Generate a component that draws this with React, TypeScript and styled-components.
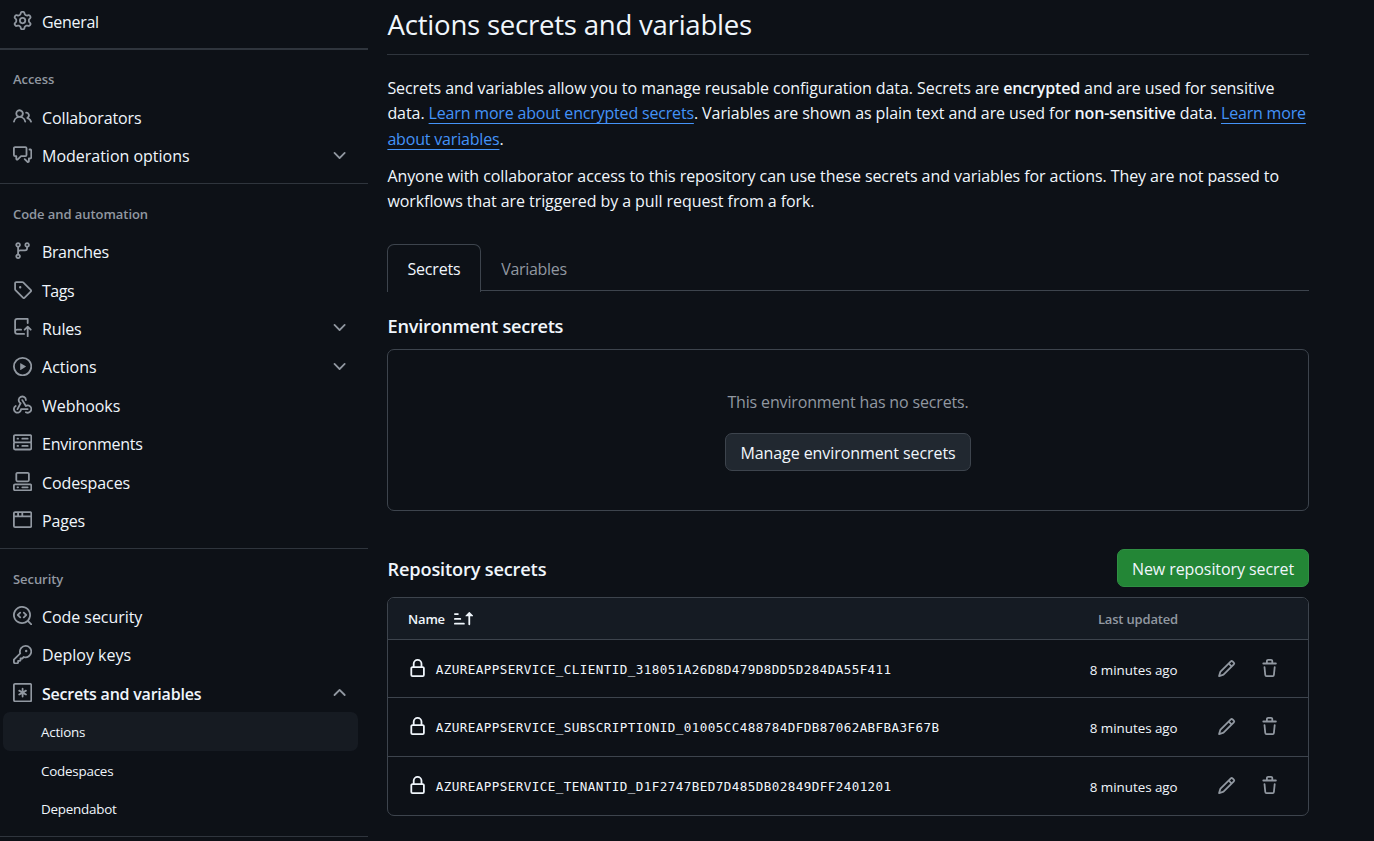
import React from 'react';
import styled, { createGlobalStyle } from 'styled-components';

const GlobalStyle = createGlobalStyle`
  * { box-sizing: border-box; }
  html, body { margin: 0; background: #0d1117; }
  body {
    height: 841px;
    overflow: hidden;
    color: #f0f6fc;
    font-family: "Open Sans", "Noto Sans", sans-serif;
    font-size: 16px;
  }
`;

const Page = styled.div`
  display: flex;
  width: 1374px;
  height: 841px;
  overflow: hidden;
`;

const Sidebar = styled.nav`
  width: 368px;
  flex: none;
  padding-top: 2px;
`;

const NavDivider = styled.div<{ $thick?: boolean }>`
  height: 19.2px;
  padding-top: ${(p) => (p.$thick ? '7.6px' : '8.4px')};
  &::before {
    content: '';
    display: block;
    border-top: ${(p) => (p.$thick ? 2 : 1)}px solid #2f353d;
  }
`;

const GroupLabel = styled.div`
  display: flex;
  align-items: center;
  height: 38.4px;
  padding: 1.4px 0 0 13px;
  color: #9198a1;
  font-size: 13px;
  font-weight: 600;
  letter-spacing: -0.06px;
`;

const NavRow = styled.a<{ $bold?: boolean; $tracking: number }>`
  display: flex;
  align-items: center;
  height: 38.4px;
  padding: 1.4px 19px 0 13px;
  font-weight: ${(p) => (p.$bold ? 600 : 400)};
  letter-spacing: ${(p) => p.$tracking}px;
  white-space: nowrap;
`;

const NavIcon = styled.span`
  width: 19px;
  margin: -2.4px 10px 0 0;
  color: #9198a1;
`;

const NavText = styled.span`
  flex: 1;
`;

const Chevron = styled.span`
  color: #9198a1;
  margin-top: -2.2px;
`;

const SubRow = styled.a<{ $active?: boolean }>`
  display: flex;
  align-items: center;
  height: 38.4px;
  margin: 0 10px 0 3px;
  padding: 1.6px 0 0 38px;
  border-radius: 7px;
  background: ${(p) => (p.$active ? '#161b22' : 'transparent')};
  font-size: 13.4px;
  letter-spacing: -0.22px;
`;

const Main = styled.main`
  width: 922px;
  margin-left: 19px;
`;

const Title = styled.h1`
  margin: 0;
  height: 55px;
  padding: 5px 0 0 0.6px;
  border-bottom: 1px solid #2f353d;
  font-size: 27.6px;
  line-height: 38px;
  font-weight: 400;
  letter-spacing: -0.25px;
  white-space: nowrap;
`;

const Intro = styled.div`
  height: 189px;
  padding: 20.8px 0 0 0.4px;
`;

const Paragraph = styled.p`
  margin: 0 0 11.8px;
  line-height: 25.4px;
  letter-spacing: -0.072px;
  white-space: nowrap;
  b { font-weight: 600; letter-spacing: -0.16px; }
`;

const Link = styled.a`
  color: #4493f8;
  letter-spacing: -0.18px;
  text-decoration: underline;
  text-decoration-thickness: 1px;
  text-underline-offset: 4px;
`;

const Tabs = styled.div`
  display: flex;
  height: 47px;
  box-shadow: inset 0 -1px 0 #3d444d;
`;

const Tab = styled.a<{ $selected?: boolean }>`
  display: flex;
  align-items: center;
  justify-content: center;
  width: ${(p) => (p.$selected ? 94 : 106)}px;
  height: ${(p) => (p.$selected ? 48 : 47)}px;
  padding-top: ${(p) => (p.$selected ? 1 : 3)}px;
  border: ${(p) => (p.$selected ? '1px solid #3d444d' : 'none')};
  border-bottom: 0;
  border-radius: 7px 7px 0 0;
  background: ${(p) => (p.$selected ? '#0d1117' : 'transparent')};
  color: ${(p) => (p.$selected ? '#f0f6fc' : '#9198a1')};
  letter-spacing: ${(p) => (p.$selected ? -0.15 : -0.3)}px;
`;

const Heading = styled.h2`
  margin: 0;
  padding: 2px 0 0 0.6px;
  font-size: 18.2px;
  font-weight: 600;
  letter-spacing: -0.17px;
  line-height: 28px;
`;

const EnvHeading = styled(Heading)`
  padding: 21px 0 9px 0.6px;
  letter-spacing: -0.29px;
`;

const EmptyBox = styled.section`
  display: flex;
  flex-direction: column;
  align-items: center;
  height: 162px;
  padding-top: 40px;
  border: 1px solid #3d444d;
  border-radius: 7px;
`;

const EmptyText = styled.div`
  height: 43px;
  line-height: 25px;
  color: #9198a1;
  letter-spacing: -0.155px;
`;

const Button = styled.button<{ $primary?: boolean }>`
  width: ${(p) => (p.$primary ? 192 : 246)}px;
  height: 38px;
  padding: 1px 0 0;
  border: 1px solid ${(p) => (p.$primary ? '#2f8f43' : '#3d444d')};
  border-radius: 7px;
  background: ${(p) => (p.$primary ? '#238636' : '#212830')};
  color: #f0f6fc;
  font: 400 16px "Open Sans", "Noto Sans", sans-serif;
  letter-spacing: -0.08px;
  white-space: nowrap;
`;

const RepoHeader = styled.div`
  display: flex;
  align-items: center;
  justify-content: space-between;
  height: 38px;
  margin: 38px 0 10px;
`;

const Table = styled.section`
  height: 219px;
  border: 1px solid #3d444d;
  border-radius: 7px;
  overflow: hidden;
`;

const TableHead = styled.div`
  display: flex;
  align-items: center;
  height: 41px;
  padding: 0 130px 0 20px;
  background: #151b23;
  font-size: 13px;
  font-weight: 600;
  letter-spacing: -0.17px;
  svg { margin-left: 9px; }
`;

const Updated = styled.span<{ $head?: boolean }>`
  margin-left: auto;
  padding-top: ${(p) => (p.$head ? 0 : 2.4)}px;
  color: ${(p) => (p.$head ? '#9198a1' : '#f0f6fc')};
  font-size: ${(p) => (p.$head ? 13 : 13.4)}px;
  letter-spacing: ${(p) => (p.$head ? -0.17 : -0.03)}px;
`;

const SecretRow = styled.div`
  display: flex;
  align-items: center;
  height: 58.45px;
  padding: 0 29px 0 20px;
  border-top: 1px solid #3d444d;
`;

const SecretName = styled.code`
  margin-left: 8.6px;
  padding-top: 1.6px;
  font-family: "DejaVu Sans Mono", monospace;
  font-size: 12.6px;
  letter-spacing: 0.415px;
`;

const RowIcon = styled.span<{ $gap?: number; $bright?: boolean }>`
  margin: -0.4px 0 0 ${(p) => p.$gap ?? 0}px;
  color: ${(p) => (p.$bright ? '#f0f6fc' : '#9198a1')};
`;

const IconSvg = styled.svg`
  display: block;
  flex: none;
  width: 19.2px;
  height: 19.2px;
  fill: currentColor;
`;

const iconPaths = {
  gear: 'M8 0a8.2 8.2 0 0 1 .701.031C9.444.095 9.99.645 10.16 1.29l.288 1.107c.018.066.079.158.212.224.231.114.454.243.668.386.123.082.233.09.299.071l1.103-.303c.644-.176 1.392.021 1.82.63.27.385.506.792.704 1.218.315.675.111 1.422-.364 1.891l-.814.806c-.049.048-.098.147-.088.294.016.257.016.515 0 .772-.01.147.038.246.088.294l.814.806c.475.469.679 1.216.364 1.891a7.977 7.977 0 0 1-.704 1.217c-.428.61-1.176.807-1.82.63l-1.102-.302c-.067-.019-.177-.011-.3.071a5.909 5.909 0 0 1-.668.386c-.133.066-.194.158-.211.224l-.29 1.106c-.168.646-.715 1.196-1.458 1.26a8.006 8.006 0 0 1-1.402 0c-.743-.064-1.289-.614-1.458-1.26l-.289-1.106c-.018-.066-.079-.158-.212-.224a5.738 5.738 0 0 1-.668-.386c-.123-.082-.233-.09-.299-.071l-1.103.303c-.644.176-1.392-.021-1.82-.63a8.12 8.12 0 0 1-.704-1.218c-.315-.675-.111-1.422.363-1.891l.815-.806c.05-.048.098-.147.088-.294a6.214 6.214 0 0 1 0-.772c.01-.147-.038-.246-.088-.294l-.815-.806C.635 6.045.431 5.298.746 4.623a7.92 7.92 0 0 1 .704-1.217c.428-.61 1.176-.807 1.82-.63l1.102.302c.067.019.177.011.3-.071.214-.143.437-.272.668-.386.133-.066.194-.158.211-.224l.29-1.106C6.009.645 6.556.095 7.299.03 7.53.01 7.764 0 8 0Zm-.571 1.525c-.036.003-.108.036-.137.146l-.289 1.105c-.147.561-.549.967-.998 1.189-.173.086-.34.183-.5.29-.417.278-.97.423-1.529.27l-1.103-.303c-.109-.03-.175.016-.195.045-.22.312-.412.644-.573.99-.014.031-.021.11.059.19l.815.806c.411.406.562.957.53 1.456a4.709 4.709 0 0 0 0 .582c.032.499-.119 1.05-.53 1.456l-.815.806c-.081.08-.073.159-.059.19.162.346.353.677.573.989.02.03.085.076.195.046l1.102-.303c.56-.153 1.113-.008 1.53.27.161.107.328.204.501.29.447.222.85.629.997 1.189l.289 1.105c.029.109.101.143.137.146a6.6 6.6 0 0 0 1.142 0c.036-.003.108-.036.137-.146l.289-1.105c.147-.561.549-.967.998-1.189.173-.086.34-.183.5-.29.417-.278.97-.423 1.529-.27l1.103.303c.109.029.175-.016.195-.045.22-.313.411-.644.573-.99.014-.031.021-.11-.059-.19l-.815-.806c-.411-.406-.562-.957-.53-1.456a4.709 4.709 0 0 0 0-.582c-.032-.499.119-1.05.53-1.456l.815-.806c.081-.08.073-.159.059-.19a6.464 6.464 0 0 0-.573-.989c-.02-.03-.085-.076-.195-.046l-1.102.303c-.56.153-1.113.008-1.53-.27a4.44 4.44 0 0 0-.501-.29c-.447-.222-.85-.629-.997-1.189l-.289-1.105c-.029-.11-.101-.143-.137-.146a6.6 6.6 0 0 0-1.142 0ZM11 8a3 3 0 1 1-6 0 3 3 0 0 1 6 0ZM9.5 8a1.5 1.5 0 1 0-3.001.001A1.5 1.5 0 0 0 9.5 8Z',
  people: 'M2 5.5a3.5 3.5 0 1 1 5.898 2.549 5.508 5.508 0 0 1 3.034 4.084.75.75 0 1 1-1.482.235 4 4 0 0 0-7.9 0 .75.75 0 0 1-1.482-.236A5.507 5.507 0 0 1 3.102 8.05 3.493 3.493 0 0 1 2 5.5ZM11 4a3.001 3.001 0 0 1 2.22 5.018 5.01 5.01 0 0 1 2.56 3.012.749.749 0 0 1-.885.954.752.752 0 0 1-.549-.514 3.507 3.507 0 0 0-2.522-2.372.75.75 0 0 1-.574-.73v-.352a.75.75 0 0 1 .416-.672A1.5 1.5 0 0 0 11 5.5.75.75 0 0 1 11 4Zm-5.5-.5a2 2 0 1 0-.001 3.999A2 2 0 0 0 5.5 3.5Z',
  discussion: 'M1.75 1h8.5c.966 0 1.75.784 1.75 1.75v5.5A1.75 1.75 0 0 1 10.25 10H7.061l-2.574 2.573A1.458 1.458 0 0 1 2 11.543V10h-.25A1.75 1.75 0 0 1 0 8.25v-5.5C0 1.784.784 1 1.75 1ZM1.5 2.75v5.5c0 .138.112.25.25.25h1a.75.75 0 0 1 .75.75v2.19l2.72-2.72a.749.749 0 0 1 .53-.22h3.5a.25.25 0 0 0 .25-.25v-5.5a.25.25 0 0 0-.25-.25h-8.5a.25.25 0 0 0-.25.25Zm13 2a.25.25 0 0 0-.25-.25h-.5a.75.75 0 0 1 0-1.5h.5c.966 0 1.75.784 1.75 1.75v5.5A1.75 1.75 0 0 1 14.25 12H14v1.543a1.458 1.458 0 0 1-2.487 1.03L9.22 12.28a.749.749 0 0 1 .326-1.275.749.749 0 0 1 .734.215l2.22 2.22v-2.19a.75.75 0 0 1 .75-.75h1a.25.25 0 0 0 .25-.25Z',
  branch: 'M9.5 3.25a2.25 2.25 0 1 1 3 2.122V6A2.5 2.5 0 0 1 10 8.5H6a1 1 0 0 0-1 1v1.128a2.251 2.251 0 1 1-1.5 0V5.372a2.25 2.25 0 1 1 1.5 0v1.836A2.493 2.493 0 0 1 6 7h4a1 1 0 0 0 1-1v-.628A2.25 2.25 0 0 1 9.5 3.25Zm-6 0a.75.75 0 1 0 1.5 0 .75.75 0 0 0-1.5 0Zm8.25-.75a.75.75 0 1 0 0 1.5.75.75 0 0 0 0-1.5ZM4.25 12a.75.75 0 1 0 0 1.5.75.75 0 0 0 0-1.5Z',
  tag: 'M1 7.775V2.75C1 1.784 1.784 1 2.75 1h5.025c.464 0 .91.184 1.238.513l6.25 6.25a1.75 1.75 0 0 1 0 2.474l-5.026 5.026a1.75 1.75 0 0 1-2.474 0l-6.25-6.25A1.752 1.752 0 0 1 1 7.775Zm1.5 0c0 .066.026.13.073.177l6.25 6.25a.25.25 0 0 0 .354 0l5.025-5.025a.25.25 0 0 0 0-.354l-6.25-6.25a.25.25 0 0 0-.177-.073H2.75a.25.25 0 0 0-.25.25ZM6 5a1 1 0 1 1 0 2 1 1 0 0 1 0-2Z',
  repoPush: 'M1 2.5A2.5 2.5 0 0 1 3.5 0h8.75a.75.75 0 0 1 .75.75v3.5a.75.75 0 0 1-1.5 0V1.5h-8a1 1 0 0 0-1 1v6.708A2.493 2.493 0 0 1 3.5 9h3.25a.75.75 0 0 1 0 1.5H3.5a1 1 0 0 0 0 2h5.75a.75.75 0 0 1 0 1.5H3.5A2.5 2.5 0 0 1 1 11.5ZM14.23 10.29h-.001l-1.224-1.224v6.184a.75.75 0 0 1-1.5 0V9.066L10.28 10.29a.75.75 0 0 1-1.06-1.061l2.505-2.504a.75.75 0 0 1 1.06 0L15.29 9.23a.751.751 0 0 1-.018 1.042.751.751 0 0 1-1.042.018Z',
  play: 'M8 0a8 8 0 1 1 0 16A8 8 0 0 1 8 0ZM1.5 8a6.5 6.5 0 1 0 13 0 6.5 6.5 0 0 0-13 0Zm4.879-2.773 4.264 2.559a.25.25 0 0 1 0 .428l-4.264 2.559A.25.25 0 0 1 6 10.559V5.442a.25.25 0 0 1 .379-.215Z',
  webhook: 'M5.5 4.25a2.25 2.25 0 0 1 4.5 0 .75.75 0 0 0 1.5 0 3.75 3.75 0 1 0-6.14 2.889l-2.272 4.258a.75.75 0 0 0 1.324.706L7 7.25a.75.75 0 0 0-.309-1.015A2.25 2.25 0 0 1 5.5 4.25ZM7.364 3.607a.75.75 0 0 1 1.03.257l2.608 4.349a3.75 3.75 0 1 1-.628 6.785.75.75 0 0 1 .752-1.299 2.25 2.25 0 1 0-.033-3.88.75.75 0 0 1-1.03-.256L7.107 4.636a.75.75 0 0 1 .257-1.03ZM2.9 8.776A.75.75 0 0 1 2.625 9.8 2.25 2.25 0 1 0 6 11.75a.75.75 0 0 1 .75-.751h5.5a.75.75 0 0 1 0 1.5H7.425a3.751 3.751 0 1 1-5.55-3.998.75.75 0 0 1 1.024.274Z',
  server: 'M1.75 1h12.5c.966 0 1.75.784 1.75 1.75v4c0 .372-.116.717-.314 1 .198.283.314.628.314 1v4a1.75 1.75 0 0 1-1.75 1.75H1.75A1.75 1.75 0 0 1 0 12.75v-4c0-.358.109-.707.314-1a1.739 1.739 0 0 1-.314-1v-4C0 1.784.784 1 1.75 1ZM1.5 2.75v4c0 .138.112.25.25.25h12.5a.25.25 0 0 0 .25-.25v-4a.25.25 0 0 0-.25-.25H1.75a.25.25 0 0 0-.25.25Zm.25 5.75a.25.25 0 0 0-.25.25v4c0 .138.112.25.25.25h12.5a.25.25 0 0 0 .25-.25v-4a.25.25 0 0 0-.25-.25ZM7 4.75A.75.75 0 0 1 7.75 4h4.5a.75.75 0 0 1 0 1.5h-4.5A.75.75 0 0 1 7 4.75ZM7.75 10h4.5a.75.75 0 0 1 0 1.5h-4.5a.75.75 0 0 1 0-1.5ZM3 4.75A.75.75 0 0 1 3.75 4h.5a.75.75 0 0 1 0 1.5h-.5A.75.75 0 0 1 3 4.75ZM3.75 10h.5a.75.75 0 0 1 0 1.5h-.5a.75.75 0 0 1 0-1.5Z',
  codespaces: 'M0 11.25c0-.966.784-1.75 1.75-1.75h12.5c.966 0 1.75.784 1.75 1.75v3A1.75 1.75 0 0 1 14.25 16H1.75A1.75 1.75 0 0 1 0 14.25Zm2-9.5C2 .784 2.784 0 3.75 0h8.5C13.216 0 14 .784 14 1.75v5a1.75 1.75 0 0 1-1.75 1.75h-8.5A1.75 1.75 0 0 1 2 6.75Zm1.75-.25a.25.25 0 0 0-.25.25v5c0 .138.112.25.25.25h8.5a.25.25 0 0 0 .25-.25v-5a.25.25 0 0 0-.25-.25Zm-2 9.5a.25.25 0 0 0-.25.25v3c0 .138.112.25.25.25h12.5a.25.25 0 0 0 .25-.25v-3a.25.25 0 0 0-.25-.25ZM7 12.75a.75.75 0 0 1 .75-.75h4.5a.75.75 0 0 1 0 1.5h-4.5a.75.75 0 0 1-.75-.75Zm-4 0a.75.75 0 0 1 .75-.75h.5a.75.75 0 0 1 0 1.5h-.5a.75.75 0 0 1-.75-.75Z',
  browser: 'M0 2.75C0 1.784.784 1 1.75 1h12.5c.966 0 1.75.784 1.75 1.75v10.5A1.75 1.75 0 0 1 14.25 15H1.75A1.75 1.75 0 0 1 0 13.25ZM14.5 6h-13v7.25c0 .138.112.25.25.25h12.5a.25.25 0 0 0 .25-.25Zm-6-3.5v2h6V2.75a.25.25 0 0 0-.25-.25ZM5 2.5v2h2v-2Zm-3.25 0a.25.25 0 0 0-.25.25V4.5h2v-2Z',
  codescan: 'M8.47 4.97a.75.75 0 0 0 0 1.06L9.94 7.5 8.47 8.97a.75.75 0 1 0 1.06 1.06l2-2a.75.75 0 0 0 0-1.06l-2-2a.75.75 0 0 0-1.06 0ZM6.53 6.03a.75.75 0 0 0-1.06-1.06l-2 2a.75.75 0 0 0 0 1.06l2 2a.75.75 0 1 0 1.06-1.06L5.06 7.5l1.47-1.47ZM12.246 13.307a7.501 7.501 0 1 1 1.06-1.06l2.474 2.473a.749.749 0 0 1-.326 1.275.749.749 0 0 1-.734-.215ZM1.5 7.5a6.002 6.002 0 0 0 3.608 5.504 6.002 6.002 0 0 0 6.486-1.117.748.748 0 0 1 .292-.293A6 6 0 1 0 1.5 7.5Z',
  key: 'M10.5 0a5.499 5.499 0 1 1-1.288 10.848l-.932.932a.749.749 0 0 1-.53.22H7v.75a.749.749 0 0 1-.22.53l-.5.5a.749.749 0 0 1-.53.22H5v.75a.749.749 0 0 1-.22.53l-.5.5a.749.749 0 0 1-.53.22h-2A1.75 1.75 0 0 1 0 14.25v-2c0-.199.079-.389.22-.53l4.932-4.932A5.5 5.5 0 0 1 10.5 0Zm-4 5.5c-.001.431.069.86.205 1.269a.75.75 0 0 1-.181.768L1.5 12.56v1.69c0 .138.112.25.25.25h1.69l.06-.06v-1.19a.75.75 0 0 1 .75-.75h1.19l.06-.06v-1.19a.75.75 0 0 1 .75-.75h1.19l1.023-1.025a.75.75 0 0 1 .768-.18A4 4 0 1 0 6.5 5.5ZM11 6a1 1 0 1 1 0-2 1 1 0 0 1 0 2Z',
  asterisk: 'M1.75 0h12.5C15.216 0 16 .784 16 1.75v12.5A1.75 1.75 0 0 1 14.25 16H1.75A1.75 1.75 0 0 1 0 14.25V1.75C0 .784.784 0 1.75 0ZM1.5 1.75v12.5c0 .138.112.25.25.25h12.5a.25.25 0 0 0 .25-.25V1.75a.25.25 0 0 0-.25-.25H1.75a.25.25 0 0 0-.25.25ZM8 4a.75.75 0 0 1 .75.75V6.7l1.69-.975a.75.75 0 0 1 .75 1.3L9.5 8l1.69.976a.75.75 0 0 1-.75 1.298L8.75 9.3v1.951a.75.75 0 0 1-1.5 0V9.299l-1.69.976a.75.75 0 0 1-.75-1.3L6.5 8l-1.69-.975a.75.75 0 0 1 .75-1.3l1.69.976V4.75A.75.75 0 0 1 8 4Z',
  down: 'M12.78 5.22a.749.749 0 0 1 0 1.06l-4.25 4.25a.749.749 0 0 1-1.06 0L3.22 6.28a.749.749 0 1 1 1.06-1.06L8 8.939l3.72-3.719a.749.749 0 0 1 1.06 0Z',
  up: 'M3.22 10.53a.749.749 0 0 1 0-1.06l4.25-4.25a.749.749 0 0 1 1.06 0l4.25 4.25a.749.749 0 1 1-1.06 1.06L8 6.811 4.28 10.53a.749.749 0 0 1-1.06 0Z',
  lock: 'M4 4a4 4 0 0 1 8 0v2h.25c.966 0 1.75.784 1.75 1.75v5.5A1.75 1.75 0 0 1 12.25 15h-8.5A1.75 1.75 0 0 1 2 13.25v-5.5C2 6.784 2.784 6 3.75 6H4Zm8.25 3.5h-8.5a.25.25 0 0 0-.25.25v5.5c0 .138.112.25.25.25h8.5a.25.25 0 0 0 .25-.25v-5.5a.25.25 0 0 0-.25-.25ZM10.5 6V4a2.5 2.5 0 1 0-5 0v2Z',
  pencil: 'M11.013 1.427a1.75 1.75 0 0 1 2.474 0l1.086 1.086a1.75 1.75 0 0 1 0 2.474l-8.61 8.61c-.21.21-.47.364-.756.445l-3.251.93a.75.75 0 0 1-.927-.928l.929-3.25c.081-.286.235-.547.445-.758l8.61-8.61Zm.176 4.823L9.75 4.81l-6.286 6.287a.253.253 0 0 0-.064.108l-.558 1.953 1.953-.558a.253.253 0 0 0 .108-.064Zm1.238-3.763a.25.25 0 0 0-.354 0L10.811 3.75l1.439 1.44 1.263-1.263a.25.25 0 0 0 0-.354Z',
  trash: 'M11 1.75V3h2.25a.75.75 0 0 1 0 1.5H2.75a.75.75 0 0 1 0-1.5H5V1.75C5 .784 5.784 0 6.75 0h2.5C10.216 0 11 .784 11 1.75ZM4.496 6.675l.66 6.6a.25.25 0 0 0 .249.225h5.19a.25.25 0 0 0 .249-.225l.66-6.6a.75.75 0 0 1 1.492.149l-.66 6.6A1.748 1.748 0 0 1 10.595 15h-5.19a1.75 1.75 0 0 1-1.741-1.575l-.66-6.6a.75.75 0 1 1 1.492-.15ZM6.5 1.75V3h3V1.75a.25.25 0 0 0-.25-.25h-2.5a.25.25 0 0 0-.25.25Z',
  sortAsc: 'm12.927 2.573 3 3A.25.25 0 0 1 15.75 6H13.5v6.75a.75.75 0 0 1-1.5 0V6H9.75a.25.25 0 0 1-.177-.427l3-3a.25.25 0 0 1 .354 0ZM0 12.25a.75.75 0 0 1 .75-.75h7.5a.75.75 0 0 1 0 1.5H.75a.75.75 0 0 1-.75-.75Zm0-4a.75.75 0 0 1 .75-.75h4.5a.75.75 0 0 1 0 1.5H.75A.75.75 0 0 1 0 8.25Zm0-4a.75.75 0 0 1 .75-.75h2.5a.75.75 0 0 1 0 1.5H.75A.75.75 0 0 1 0 4.25Z',
};

type IconName = keyof typeof iconPaths;

const Icon = ({ name }: { name: IconName }) => (
  <IconSvg viewBox="0 0 16 16" aria-hidden="true">
    <path d={iconPaths[name]} />
  </IconSvg>
);

type Item = { icon: IconName; label: string; tracking?: number; expand?: 'down' | 'up' };

const access: Item[] = [
  { icon: 'people', label: 'Collaborators', tracking: -0.12 },
  { icon: 'discussion', label: 'Moderation options', tracking: -0.01, expand: 'down' },
];
const automation: Item[] = [
  { icon: 'branch', label: 'Branches', tracking: -0.38 },
  { icon: 'tag', label: 'Tags', tracking: -0.45 },
  { icon: 'repoPush', label: 'Rules', tracking: -0.15, expand: 'down' },
  { icon: 'play', label: 'Actions', tracking: 0.02, expand: 'down' },
  { icon: 'webhook', label: 'Webhooks', tracking: -0.04 },
  { icon: 'server', label: 'Environments', tracking: -0.25 },
  { icon: 'codespaces', label: 'Codespaces', tracking: -0.1 },
  { icon: 'browser', label: 'Pages', tracking: -0.15 },
];
const security: Item[] = [
  { icon: 'codescan', label: 'Code security', tracking: -0.06 },
  { icon: 'key', label: 'Deploy keys', tracking: -0.02 },
  { icon: 'asterisk', label: 'Secrets and variables', tracking: -0.22, expand: 'up' },
];
const secrets = [
  'AZUREAPPSERVICE_CLIENTID_318051A26D8D479D8DD5D284DA55F411',
  'AZUREAPPSERVICE_SUBSCRIPTIONID_01005CC488784DFDB87062ABFBA3F67B',
  'AZUREAPPSERVICE_TENANTID_D1F2747BED7D485DB02849DFF2401201',
];

const NavItem = ({ icon, label, tracking = -0.3, expand }: Item) => (
  <NavRow $bold={expand === 'up'} $tracking={tracking}>
    <NavIcon><Icon name={icon} /></NavIcon>
    <NavText>{label}</NavText>
    {expand && <Chevron><Icon name={expand} /></Chevron>}
  </NavRow>
);

export default function App() {
  return (
    <Page>
      <GlobalStyle />
      <Sidebar>
        <NavItem icon="gear" label="General" />
        <NavDivider $thick />
        <GroupLabel>Access</GroupLabel>
        {access.map((i) => <NavItem key={i.label} {...i} />)}
        <NavDivider />
        <GroupLabel>Code and automation</GroupLabel>
        {automation.map((i) => <NavItem key={i.label} {...i} />)}
        <NavDivider />
        <GroupLabel>Security</GroupLabel>
        {security.map((i) => <NavItem key={i.label} {...i} />)}
        <SubRow $active>Actions</SubRow>
        <SubRow>Codespaces</SubRow>
        <SubRow>Dependabot</SubRow>
        <NavDivider />
      </Sidebar>
      <Main>
        <Title>Actions secrets and variables</Title>
        <Intro>
          <Paragraph>
            Secrets and variables allow you to manage reusable configuration data. Secrets are <b>encrypted</b> and are used for sensitive<br />
            data. <Link>Learn more about encrypted secrets</Link>. Variables are shown as plain text and are used for <b>non-sensitive</b> data. <Link>Learn more<br />
            about variables</Link>.
          </Paragraph>
          <Paragraph>
            Anyone with collaborator access to this repository can use these secrets and variables for actions. They are not passed to<br />
            workflows that are triggered by a pull request from a fork.
          </Paragraph>
        </Intro>
        <Tabs>
          <Tab $selected>Secrets</Tab>
          <Tab>Variables</Tab>
        </Tabs>
        <EnvHeading>Environment secrets</EnvHeading>
        <EmptyBox>
          <EmptyText>This environment has no secrets.</EmptyText>
          <Button>Manage environment secrets</Button>
        </EmptyBox>
        <RepoHeader>
          <Heading>Repository secrets</Heading>
          <Button $primary>New repository secret</Button>
        </RepoHeader>
        <Table>
          <TableHead>
            Name <Icon name="sortAsc" />
            <Updated $head>Last updated</Updated>
          </TableHead>
          {secrets.map((name) => (
            <SecretRow key={name}>
              <RowIcon $bright><Icon name="lock" /></RowIcon>
              <SecretName>{name}</SecretName>
              <Updated>8 minutes ago</Updated>
              <RowIcon $gap={39}><Icon name="pencil" /></RowIcon>
              <RowIcon $gap={24}><Icon name="trash" /></RowIcon>
            </SecretRow>
          ))}
        </Table>
      </Main>
    </Page>
  );
}
